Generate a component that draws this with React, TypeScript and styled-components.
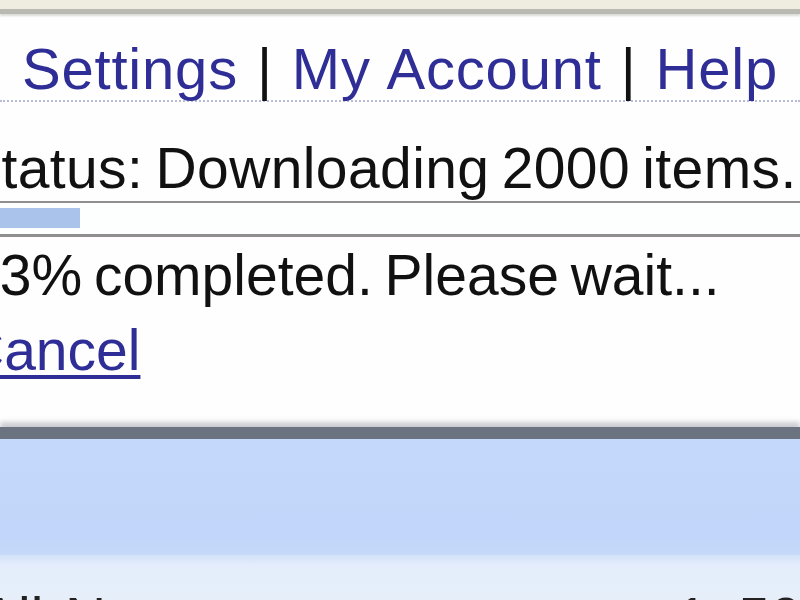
import React from "react";
import styled, { createGlobalStyle } from "styled-components";

const Global = createGlobalStyle`
  html, body { margin: 0; padding: 0; background: #ffffff; overflow: hidden; }
  body { font-family: "Liberation Sans", Arial, sans-serif; }
  * { box-sizing: border-box; }
`;

const Page = styled.div`
  width: 800px;
  height: 600px;
  overflow: hidden;
  display: flex;
  flex-direction: column;
  background: #fefefe;
  font-size: 57px;
  line-height: 66px;
`;

const TopStrip = styled.div`
  height: 14px;
  flex: none;
  background: #efeddf;
  border-bottom: 5px solid #b9b9b2;
  box-shadow: 0 2px 2px rgba(150, 150, 140, 0.35);
`;

const NavBar = styled.nav`
  display: flex;
  align-items: baseline;
  gap: 19px;
  padding: 25px 0 1px 22px;
  border-bottom: 2px dotted #b8bbd8;
  white-space: nowrap;
  font-size: 58px;
  line-height: 60px;
  letter-spacing: 0.8px;
`;

const NavLink = styled.a`
  color: #2e2e96;
  text-decoration: none;
  word-spacing: 2px;
`;

const Sep = styled.span`
  color: #111111;
`;

const StatusLine = styled.div`
  padding-top: 34px;
  margin-left: -37px;
  color: #111111;
  white-space: nowrap;
  line-height: 65px;
  letter-spacing: 0.4px;
  word-spacing: -4px;
`;

const Track = styled.div`
  height: 36px;
  flex: none;
  border-top: 2px solid #8f8f8f;
  border-bottom: 3px solid #8f8f8f;
  background: #fdfefe;
  display: flex;
  align-items: flex-start;
`;

const Fill = styled.div`
  height: 20px;
  margin-top: 5px;
  background: #a9c3ea;
`;

const Message = styled.div`
  margin-top: 5px;
  margin-left: -32px;
  color: #111111;
  white-space: nowrap;
  letter-spacing: 0px;
  word-spacing: -4px;
`;

const CancelLink = styled.a`
  display: block;
  align-self: flex-start;
  margin-top: 9px;
  margin-left: -37px;
  color: #2e2e96;
  text-decoration: underline;
  text-decoration-thickness: 4px;
  text-underline-offset: 5px;
  letter-spacing: 0px;
`;

const Spacer = styled.div`
  flex: 1;
  background: #fefefe;
`;

const DarkBar = styled.div`
  height: 12px;
  flex: none;
  background: #6c7380;
  box-shadow: 0 -5px 5px rgba(110, 115, 128, 0.35);
`;

const BlueBand = styled.div`
  height: 116px;
  flex: none;
  background: linear-gradient(#c4d8fb, #c1d6fa 85%, #c6d9f9);
`;

const Footer = styled.div`
  height: 45px;
  flex: none;
  display: grid;
  grid-template-columns: 682px 1fr;
  overflow: hidden;
  background: linear-gradient(#d3e2f9, #e3edfb 10px, #e6eff9);
  padding-top: 30px;
  color: #222222;
  white-space: nowrap;
`;

const FooterText = styled.span<{ $left?: number }>`
  margin-left: ${(p) => p.$left ?? 0}px;
  word-spacing: -10px;
`;

export default function App() {
  const percent = 10;
  return (
    <>
      <Global />
      <Page>
        <TopStrip />
        <NavBar>
          <NavLink href="#">Settings</NavLink>
          <Sep>|</Sep>
          <NavLink href="#">My Account</NavLink>
          <Sep>|</Sep>
          <NavLink href="#">Help</NavLink>
        </NavBar>
        <StatusLine>Status: Downloading 2000 items.</StatusLine>
        <Track>
          <Fill style={{ width: `${percent}%` }} />
        </Track>
        <Message>13% completed. Please wait...</Message>
        <CancelLink href="#">Cancel</CancelLink>
        <Spacer />
        <DarkBar />
        <BlueBand />
        <Footer>
          <FooterText $left={-20}>All, None</FooterText>
          <FooterText $left={-6}>1 - 50 of 2000</FooterText>
        </Footer>
      </Page>
    </>
  );
}
